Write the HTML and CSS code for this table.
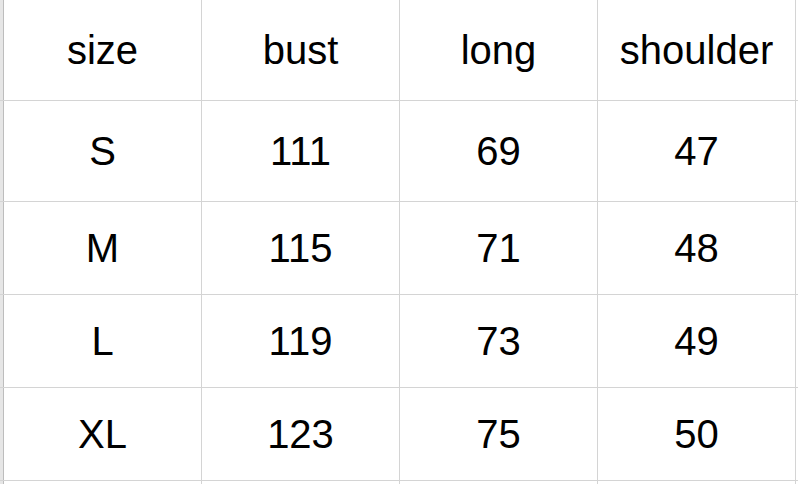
FILE: index.html
```html
<!DOCTYPE html>
<html lang="en">
<head>
<meta charset="utf-8">
<title>Size chart</title>
<link rel="stylesheet" href="styles.css">
</head>
<body>
<div class="sheet">
  <div class="edge"></div><div class="cell">size</div><div class="cell">bust</div><div class="cell">long</div><div class="cell">shoulder</div><div class="blank"></div>
  <div class="edge"></div><div class="cell">S</div><div class="cell">111</div><div class="cell">69</div><div class="cell">47</div><div class="blank"></div>
  <div class="edge"></div><div class="cell">M</div><div class="cell">115</div><div class="cell">71</div><div class="cell">48</div><div class="blank"></div>
  <div class="edge"></div><div class="cell">L</div><div class="cell">119</div><div class="cell">73</div><div class="cell">49</div><div class="blank"></div>
  <div class="edge"></div><div class="cell">XL</div><div class="cell">123</div><div class="cell">75</div><div class="cell">50</div><div class="blank"></div>
  <div class="edge"></div><div class="blank"></div><div class="blank"></div><div class="blank"></div><div class="blank"></div><div class="blank"></div>
</div>
</body>
</html>
```

FILE: styles.css
```css
html, body {
  margin: 0;
  padding: 0;
  background: #ffffff;
  overflow: hidden;
}
.sheet {
  display: grid;
  grid-template-columns: 3px repeat(4, 197px) 1fr;
  grid-template-rows: 100px 100px 92px 92px 92px 10px;
  gap: 1px;
  background: #d4d4d4;
  width: 798px;
  height: 494px;
  font-family: "Liberation Sans", Arial, sans-serif;
  font-size: 40px;
  color: #000000;
}
.edge {
  background: #e6e6e6;
  border-right: 1px solid #bdbdbd;
  margin-right: -1px;
}
.cell {
  background: #ffffff;
  display: flex;
  align-items: center;
  justify-content: center;
}
.blank {
  background: #ffffff;
}
```
